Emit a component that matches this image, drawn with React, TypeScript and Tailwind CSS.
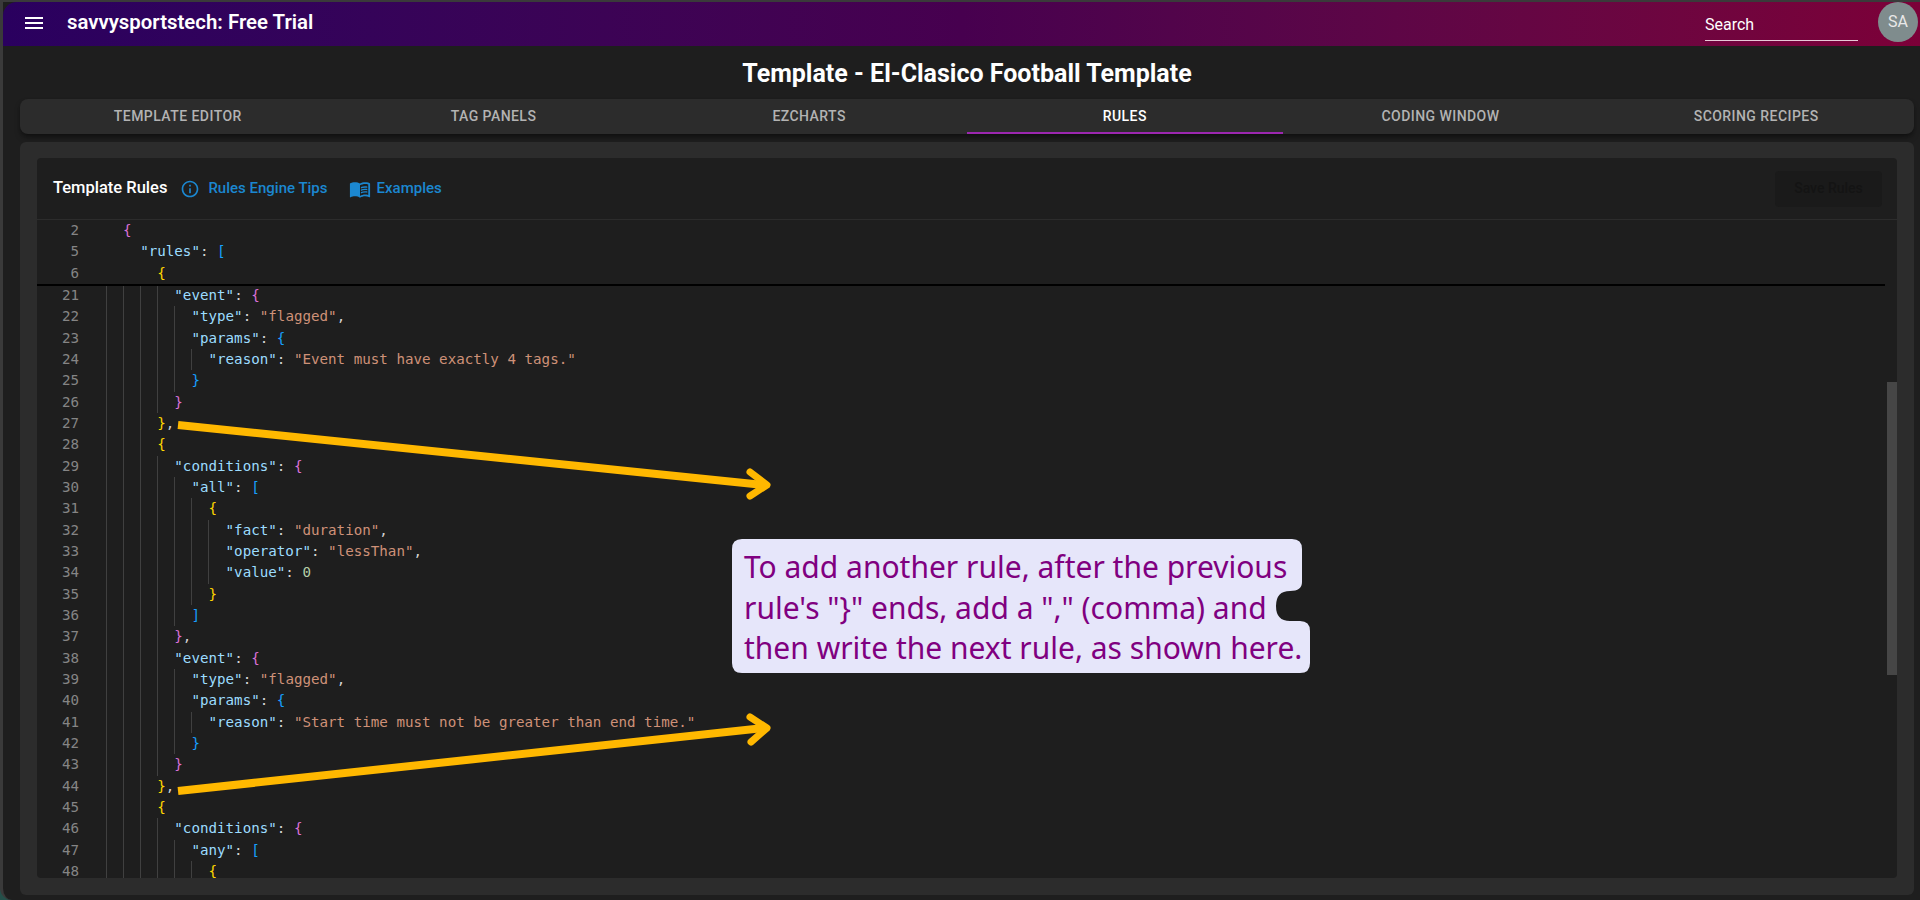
import { MdInfoOutline, MdMenu, MdMenuBook } from "react-icons/md";

const tabs = ["Template Editor", "Tag Panels", "EZCharts", "Rules", "Coding Window", "Scoring Recipes"];

const mono = "font-['DejaVu_Sans_Mono','Liberation_Mono',monospace]";

// bracket colour goes by nesting depth, same as the editor
const bracketColor = (indent: number) =>
  indent % 6 === 2 ? "text-[#da70d6]" : indent % 6 === 4 ? "text-[#179fff]" : "text-[#ffd700]";

type Line = { n: number; indent: number; key?: string; value?: string; num?: string; open?: string; close?: string; comma?: boolean };

const stickyLines: Line[] = [
  { n: 2, indent: 2, open: "{" },
  { n: 5, indent: 4, key: "rules", open: "[" },
  { n: 6, indent: 6, open: "{" },
];

const lines: Line[] = [
  { n: 21, indent: 8, key: "event", open: "{" },
  { n: 22, indent: 10, key: "type", value: "flagged", comma: true },
  { n: 23, indent: 10, key: "params", open: "{" },
  { n: 24, indent: 12, key: "reason", value: "Event must have exactly 4 tags." },
  { n: 25, indent: 10, close: "}" },
  { n: 26, indent: 8, close: "}" },
  { n: 27, indent: 6, close: "}", comma: true },
  { n: 28, indent: 6, open: "{" },
  { n: 29, indent: 8, key: "conditions", open: "{" },
  { n: 30, indent: 10, key: "all", open: "[" },
  { n: 31, indent: 12, open: "{" },
  { n: 32, indent: 14, key: "fact", value: "duration", comma: true },
  { n: 33, indent: 14, key: "operator", value: "lessThan", comma: true },
  { n: 34, indent: 14, key: "value", num: "0" },
  { n: 35, indent: 12, close: "}" },
  { n: 36, indent: 10, close: "]" },
  { n: 37, indent: 8, close: "}", comma: true },
  { n: 38, indent: 8, key: "event", open: "{" },
  { n: 39, indent: 10, key: "type", value: "flagged", comma: true },
  { n: 40, indent: 10, key: "params", open: "{" },
  { n: 41, indent: 12, key: "reason", value: "Start time must not be greater than end time." },
  { n: 42, indent: 10, close: "}" },
  { n: 43, indent: 8, close: "}" },
  { n: 44, indent: 6, close: "}", comma: true },
  { n: 45, indent: 6, open: "{" },
  { n: 46, indent: 8, key: "conditions", open: "{" },
  { n: 47, indent: 10, key: "any", open: "[" },
  { n: 48, indent: 12, open: "{" },
];

function CodeLine({ line, guides }: { line: Line; guides: boolean }) {
  const levels = Array.from({ length: line.indent / 2 });
  return (
    <div className="flex h-[21.33px] leading-[21.33px] whitespace-pre">
      <span className="w-[42px] shrink-0 text-right text-[#858585]">{line.n}</span>
      <span className="w-[27px] shrink-0" />
      {levels.map((_, i) => (
        <span key={i} className={`inline-block w-[2ch] shrink-0 ${guides ? "border-l border-[#404040]" : ""}`} />
      ))}
      <span className="text-[#d4d4d4]">
        {line.key && <span className="text-[#9cdcfe]">"{line.key}"</span>}
        {line.key && ": "}
        {line.value && <span className="text-[#ce9178]">"{line.value}"</span>}
        {line.num && <span className="text-[#b5cea8]">{line.num}</span>}
        {line.open && <span className={bracketColor(line.indent)}>{line.open}</span>}
        {line.close && <span className={bracketColor(line.indent)}>{line.close}</span>}
        {line.comma && ","}
      </span>
    </div>
  );
}

export default function App() {
  return (
    <div className="relative h-[900px] w-[1920px] overflow-hidden bg-[#24504a] font-['Roboto',sans-serif]">
      {/* window edge */}
      <div className="flex h-full flex-col rounded-bl-[12px] border-t-2 border-l-[3px] border-[#3a3a3a] bg-[#1e1e1e]">
        <header className="flex h-[44px] shrink-0 items-center rounded-tl-[14px] bg-gradient-to-r from-[#2a005f] via-[#47004f] to-[#7c0038] pl-[19px] pr-[2px]">
          <MdMenu className="mb-[3px] h-[24px] w-[24px] text-white" />
          <span className="mb-[4px] ml-[21px] text-[20.4px] font-semibold text-white">savvysportstech: Free Trial</span>
          <div className="ml-auto mr-[20px] flex h-[39px] w-[153px] items-start self-start border-b-[1.5px] border-[#e8c8d8] pt-[13px] text-[16px] leading-[20px] text-white">
            Search
          </div>
          <div className="mb-[4px] flex h-[40px] w-[40px] items-center justify-center rounded-full bg-[#7f8c8d] text-[16px] text-[#e8e8e8]">
            SA
          </div>
        </header>

        <h1 className="mt-[12px] h-[32px] pl-[11px] text-center text-[25px] leading-[32px] font-bold text-white">
          Template - El-Clasico Football Template
        </h1>

        <nav className="ml-[17px] mr-[6px] mt-[9px] grid h-[35px] shrink-0 grid-cols-6 rounded-[8px] bg-[#2c2c2c] shadow-md shadow-black/40">
          {tabs.map((tab) => (
            <div
              key={tab}
              className={`flex items-center justify-center border-b-2 pt-[1px] text-[14px] font-medium tracking-[0.45px] uppercase ${
                tab === "Rules" ? "border-[#9c27b0] text-white" : "border-transparent text-[#b3b3b3]"
              }`}
            >
              {tab}
            </div>
          ))}
        </nav>

        <main className="mb-[5px] ml-[17px] mr-[6px] mt-[8px] flex min-h-0 flex-1 flex-col rounded-[6px] bg-[#2c2c2c] px-[17px] pt-[16px] pb-[17px]">
          <section className="flex min-h-0 flex-1 flex-col overflow-hidden rounded-[4px] bg-[#1e1e1e]">
            <div className="flex h-[62px] shrink-0 items-center border-b border-[#2c2c2c] pl-[16px] pr-[15px]">
              <span className="text-[16.5px] font-medium text-white">Template Rules</span>
              <MdInfoOutline className="ml-[13px] h-[20px] w-[20px] text-[#1b87d0]" />
              <span className="ml-[8px] text-[15px] font-medium text-[#1b87d0]">Rules Engine Tips</span>
              <MdMenuBook className="ml-[21px] h-[22px] w-[22px] text-[#1b87d0]" />
              <span className="ml-[6px] text-[15px] font-medium text-[#1b87d0]">Examples</span>
              <button className="ml-auto h-[36px] w-[107px] rounded-[4px] bg-[#1a1a1a] text-[14px] font-medium text-[#141414]">
                Save Rules
              </button>
            </div>

            <div className={`relative min-h-0 flex-1 overflow-hidden text-[14.2px] ${mono}`}>
              <div className="relative z-10 mr-[12px] -mb-[1px] border-b-2 border-black">
                {stickyLines.map((line) => (
                  <CodeLine key={line.n} line={line} guides={false} />
                ))}
              </div>
              {lines.map((line) => (
                <CodeLine key={line.n} line={line} guides />
              ))}
              <div className="absolute right-0 top-[162px] h-[293px] w-[10px] bg-[#464646]" />
            </div>
          </section>
        </main>
      </div>

      {/* annotation arrows drawn over the editor */}
      <svg className="pointer-events-none absolute inset-0" width="1920" height="900" fill="none" stroke="#ffb800">
        <path d="M178 425 L764 485" strokeWidth="8" />
        <path d="M750 472 L767 485 L750 496" strokeWidth="7" strokeLinecap="round" strokeLinejoin="round" />
        <path d="M178 791 L764 728" strokeWidth="8" />
        <path d="M750 717 L767 728 L751 742" strokeWidth="7" strokeLinecap="round" strokeLinejoin="round" />
      </svg>

      {/* callout */}
      <div className="absolute left-[732px] top-[539px] h-[134px] w-[578px] pl-[12px] pt-[8px]">
        <svg className="absolute inset-0" width="578" height="134" fill="#e6e6fa">
          <path d="M10 0 H560 Q570 0 570 10 V43 Q570 52 558 52 Q544 52 544 67 Q544 82 558 82 H568 Q578 82 578 92 V124 Q578 134 568 134 H10 Q0 134 0 124 V10 Q0 0 10 0 Z" />
        </svg>
        <p className="relative whitespace-pre text-[30px] leading-[40.7px] text-[#800080] font-['Noto_Sans',sans-serif]">
          {"To add another rule, after the previous\nrule's \"}\" ends, add a \",\" (comma) and\nthen write the next rule, as shown here."}
        </p>
      </div>
    </div>
  );
}
